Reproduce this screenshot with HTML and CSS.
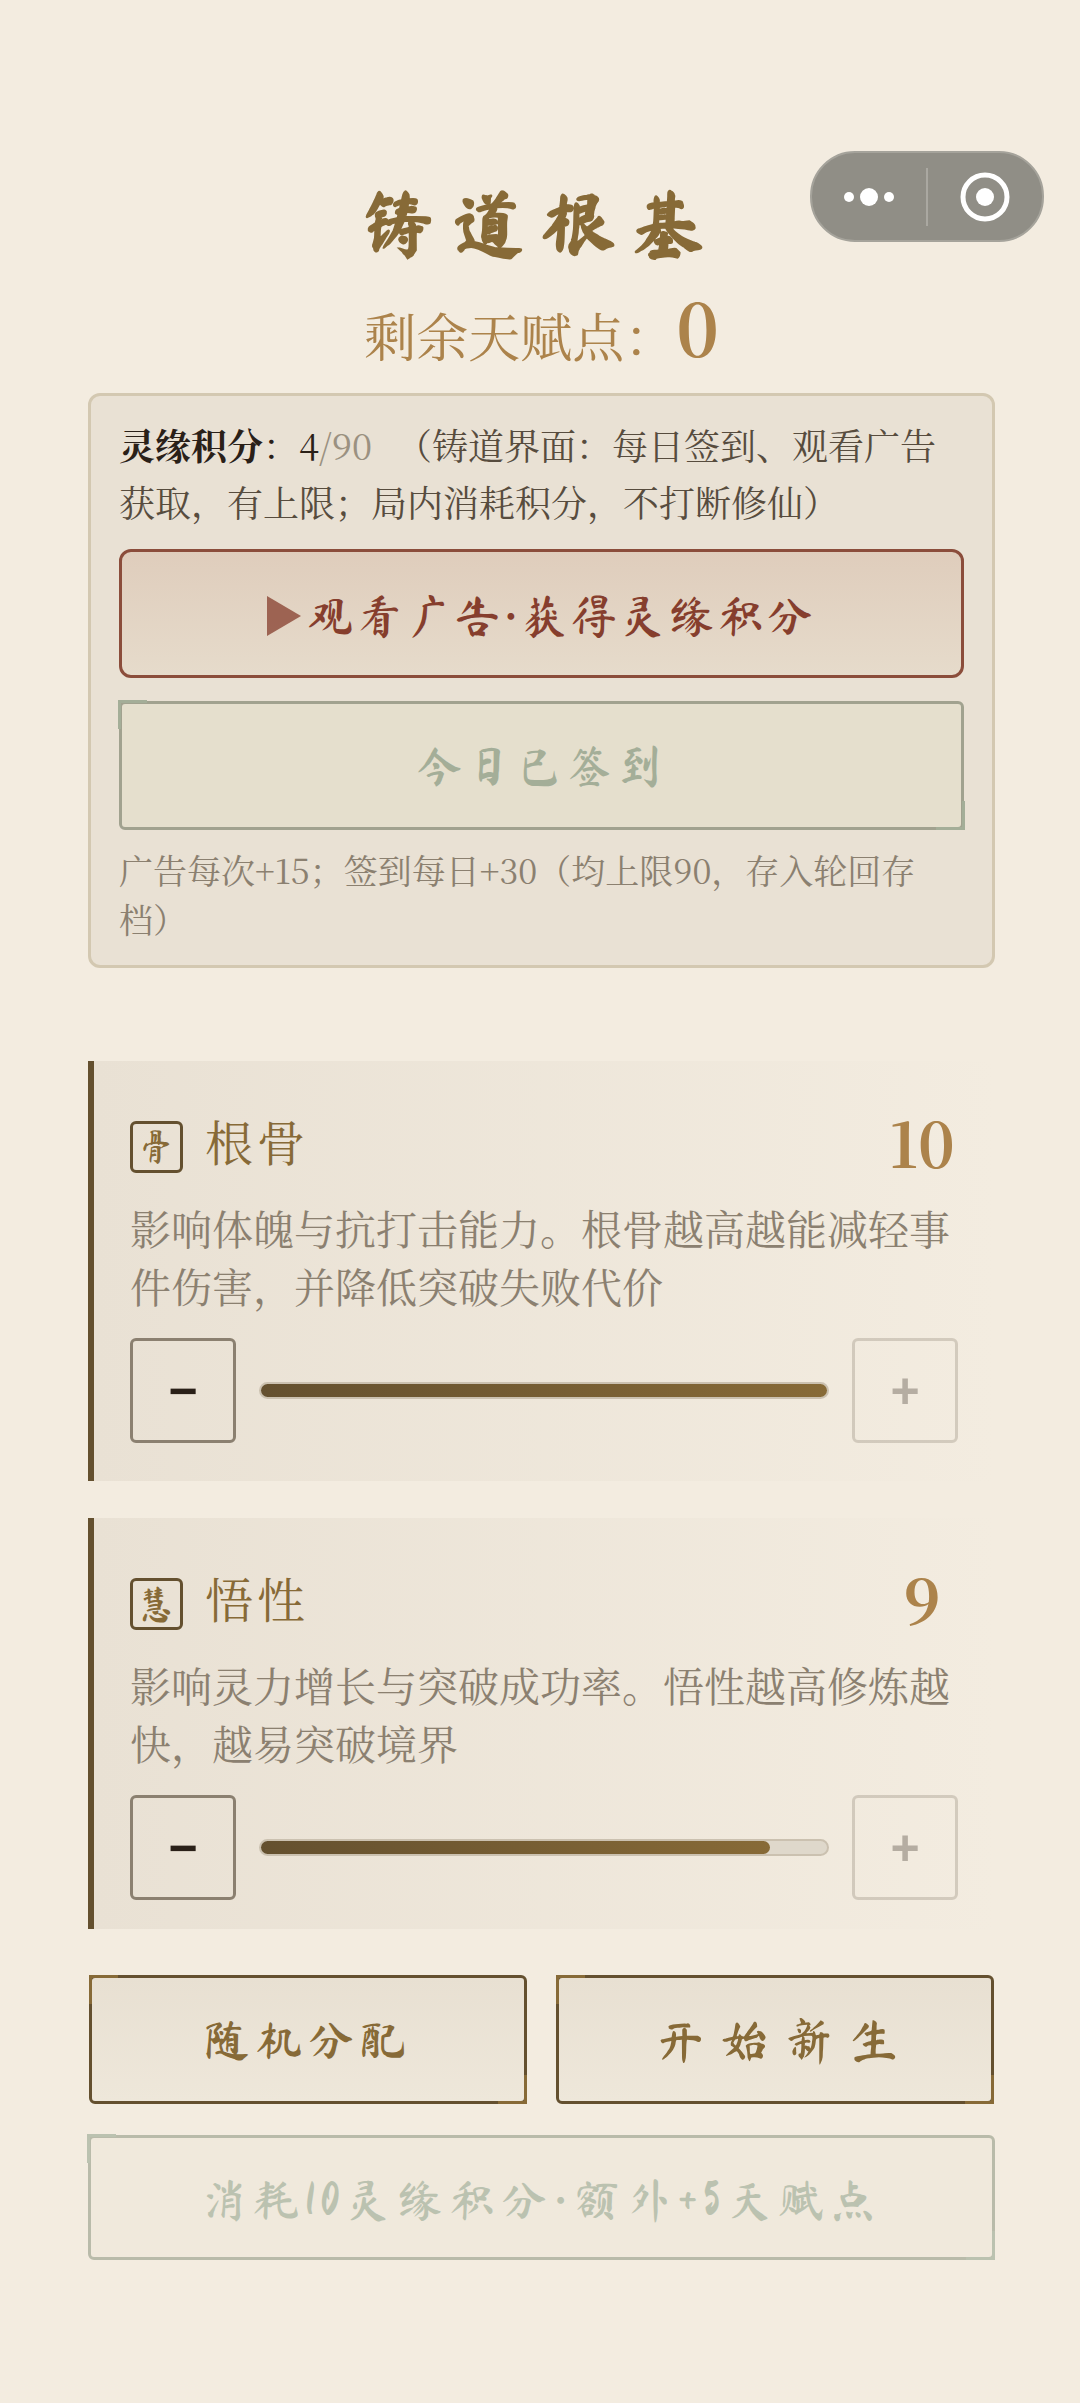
FILE: index.html
```html
<!DOCTYPE html>
<html lang="zh-CN">
<head>
<meta charset="utf-8">
<meta name="viewport" content="width=device-width, initial-scale=1">
<title>铸道根基</title>
<link rel="stylesheet" href="styles.css">
</head>
<body>
<nav class="capsule" aria-label="小程序">
  <button class="capsule-btn" type="button" aria-label="更多">
    <svg width="50" height="20" viewBox="0 0 50 20" fill="currentColor"><circle cx="5" cy="10" r="5"/><circle cx="25" cy="10" r="9"/><circle cx="45" cy="10" r="5"/></svg>
  </button>
  <span class="capsule-line"></span>
  <button class="capsule-btn" type="button" aria-label="关闭">
    <svg width="50" height="50" viewBox="0 0 50 50"><circle cx="25" cy="25" r="22" fill="none" stroke="currentColor" stroke-width="5"/><circle cx="25" cy="25" r="9" fill="currentColor"/></svg>
  </button>
</nav>

<main class="page">
  <header class="head">
    <h1 class="title">铸道根基</h1>
    <p class="points">剩余天赋点：<strong class="points-value">0</strong></p>
  </header>

  <section class="panel">
    <p class="panel-text"><strong class="label">灵缘积分</strong>：4<span class="cap">/90</span><span class="note">（铸道界面：每日签到、观看广告获取，有上限；局内消耗积分，不打断修仙）</span></p>
    <button class="btn btn-ad" type="button">
      <svg class="play" width="34" height="40" viewBox="0 0 34 40" fill="currentColor"><path d="M0 0 34 20 0 40Z"/></svg>观看广告·获得灵缘积分
    </button>
    <button class="btn btn-sign corners" type="button" disabled>今日已签到</button>
    <p class="hint">广告每次+15；签到每日+30（均上限90，存入轮回存档）</p>
  </section>

  <section class="attrs">
    <article class="attr">
      <div class="attr-head">
        <div class="attr-title">
          <span class="seal">骨</span>
          <h2 class="attr-name">根骨</h2>
        </div>
        <span class="attr-value">10</span>
      </div>
      <p class="attr-desc">影响体魄与抗打击能力。根骨越高越能减轻事件伤害，并降低突破失败代价</p>
      <div class="stepper">
        <button class="step" type="button" aria-label="减少根骨">−</button>
        <div class="track" role="progressbar" aria-label="根骨" aria-valuemin="0" aria-valuemax="10" aria-valuenow="10"><div class="fill" style="width:100%"></div></div>
        <button class="step" type="button" aria-label="增加根骨" disabled>+</button>
      </div>
    </article>
    <article class="attr">
      <div class="attr-head">
        <div class="attr-title">
          <span class="seal">慧</span>
          <h2 class="attr-name">悟性</h2>
        </div>
        <span class="attr-value">9</span>
      </div>
      <p class="attr-desc">影响灵力增长与突破成功率。悟性越高修炼越快，越易突破境界</p>
      <div class="stepper">
        <button class="step" type="button" aria-label="减少悟性">−</button>
        <div class="track" role="progressbar" aria-label="悟性" aria-valuemin="0" aria-valuemax="10" aria-valuenow="9"><div class="fill" style="width:90%"></div></div>
        <button class="step" type="button" aria-label="增加悟性" disabled>+</button>
      </div>
    </article>
  </section>

  <footer class="actions">
    <div class="pair">
      <button class="btn btn-main corners" type="button">随机分配</button>
      <button class="btn btn-main btn-start corners" type="button">开始新生</button>
    </div>
    <button class="btn btn-spend corners" type="button" disabled>消耗10灵缘积分·额外+5天赋点</button>
  </footer>
</main>
</body>
</html>
```
FILE: styles.css
```css
:root {
  --paper: #f3ece0;
  --panel: #e9e1d4;
  --ink: #2a2018;
  --bronze: #876a37;
  --bronze-dark: #64502f;
  --gold: #ac834b;
  --serif: "Noto Serif CJK SC", "Noto Serif SC", "Liberation Serif", "Noto Sans CJK SC", serif;
  --brush: "Ma Shan Zheng", "KaiTi", "Noto Serif CJK SC", "Liberation Serif", "Noto Sans CJK SC", serif;
}

* { box-sizing: border-box; }

body {
  margin: 0;
  background: var(--paper);
  color: var(--ink);
  font-family: var(--serif);
  font-weight: 400;
}

h1, h2, p { margin: 0; font-weight: inherit; }

button {
  font: inherit;
  color: inherit;
  padding: 0;
}

.capsule {
  position: absolute;
  top: 151px;
  right: 36px;
  width: 234px;
  height: 91px;
  display: flex;
  align-items: center;
  border: 2px solid #a5a39b;
  border-radius: 45px;
  background: #908e86;
  color: #fff;
}

.capsule-btn {
  flex: 1;
  display: flex;
  justify-content: center;
  border: 0;
  background: none;
}

.capsule-line {
  width: 2px;
  height: 58px;
  background: #aaa8a1;
}

.page { padding: 173px 85px 143px 88px; }

.head {
  display: flex;
  flex-direction: column;
  align-items: center;
  gap: 10px;
  margin-bottom: 10px;
}

.title {
  font-family: var(--brush);
  font-size: 74px;
  font-weight: 900;
  line-height: 100px;
  letter-spacing: 16px;
  color: var(--bronze);
}

.points {
  display: flex;
  align-items: baseline;
  height: 100px;
  font-size: 52px;
  line-height: 86px;
  color: var(--gold);
}

.points-value {
  font-size: 72px;
  font-weight: 700;
}

.panel {
  display: flex;
  flex-direction: column;
  padding: 20px 28px 22px;
  border: 3px solid #d3c8b1;
  border-radius: 12px;
  background: var(--panel);
}

.panel-text {
  margin-bottom: 19px;
  font-size: 36px;
  line-height: 57px;
}

.label { font-weight: 700; }
.cap { color: #9b9181; margin-right: 24px; }
.note { color: #574c3e; }

.btn {
  position: relative;
  display: flex;
  align-items: center;
  justify-content: center;
  height: 129px;
  border: 3px solid;
  border-radius: 6px;
  font-family: var(--brush);
  font-size: 46px;
  font-weight: 600;
  line-height: 60px;
  letter-spacing: 4px;
}

.btn-ad {
  padding-top: 4px;
  border-color: #8b4d3b;
  border-radius: 12px;
  background: linear-gradient(#dfcdbc, #e6dbcb);
  color: #863e2d;
  letter-spacing: 3px;
}

.play {
  margin-right: 6px;
  opacity: 0.75;
}

.btn-sign {
  margin-top: 23px;
  border-color: #a1a28f;
  background: #e5dfcd;
  color: #a4ae98;
}

/* accent strokes on two opposite corners */
.corners::before,
.corners::after {
  content: "";
  position: absolute;
  width: 26px;
  height: 26px;
}

.corners::before {
  top: -4px;
  left: -4px;
  border-top: 3px solid;
  border-left: 3px solid;
}

.corners::after {
  right: -4px;
  bottom: -3px;
  border-right: 3px solid;
  border-bottom: 3px solid;
}

.hint {
  margin-top: 15px;
  font-size: 34px;
  line-height: 49px;
  color: #8b8070;
}

.attrs {
  display: flex;
  flex-direction: column;
  gap: 37px;
  max-height: 868px;
  margin-top: 93px;
  overflow-y: auto;
  scrollbar-width: none;
}

.attr {
  flex: none;
  padding: 34px 37px 38px 36px;
  border-left: 6px solid var(--bronze-dark);
  background: linear-gradient(to right, var(--panel), var(--paper));
}

.attr-head {
  display: flex;
  align-items: center;
  justify-content: space-between;
  height: 94px;
  margin-bottom: 10px;
  line-height: 60px;
}

.attr-title {
  display: flex;
  align-items: baseline;
  gap: 22px;
}

.seal {
  width: 53px;
  height: 52px;
  border: 3px solid var(--bronze-dark);
  border-radius: 6px;
  font-family: var(--brush);
  font-size: 38px;
  line-height: 46px;
  text-align: center;
  color: var(--bronze);
}

.attr-name {
  font-size: 48px;
  letter-spacing: 4px;
  color: var(--bronze);
}

.attr-value {
  min-width: 72px;
  font-size: 62px;
  font-weight: 700;
  text-align: center;
  color: var(--gold);
}

.attr-desc {
  font-size: 41px;
  line-height: 58px;
  color: #8b8070;
}

.stepper {
  display: flex;
  align-items: center;
  gap: 23px;
  margin-top: 23px;
}

.step {
  width: 106px;
  height: 105px;
  border: 3px solid #8b8070;
  border-radius: 6px;
  background: none;
  font-family: "Liberation Sans", sans-serif;
  font-size: 50px;
  font-weight: 700;
}

.step:disabled { opacity: 0.3; }

.track {
  flex: 1;
  height: 17px;
  border: 2px solid #cbc1b0;
  border-radius: 9px;
  background: #dfd8cb;
}

.fill {
  height: 100%;
  border-radius: 7px;
  background: linear-gradient(to right, var(--bronze-dark), var(--bronze));
}

.actions {
  display: flex;
  flex-direction: column;
  gap: 31px;
  margin-top: 46px;
}

.pair {
  display: grid;
  grid-template-columns: 1fr 1fr;
  gap: 29px;
  padding: 0 1px;
}

.btn-main {
  border-color: var(--bronze-dark);
  background: linear-gradient(#e8e0d2, #eee7da);
  color: var(--bronze);
  letter-spacing: 6px;
}

.btn-main::before { top: -3px; left: -3px; }
.btn-main::after { right: -3px; }

.btn-start {
  padding-left: 18px;
  font-size: 50px;
  letter-spacing: 15px;
}

.btn-spend {
  height: 125px;
  padding-top: 4px;
  border-color: #b9bbaa;
  background: #f0e9dc;
  color: #bbc2b0;
  letter-spacing: 6px;
}

.btn-spend::after { right: -3px; }
```
